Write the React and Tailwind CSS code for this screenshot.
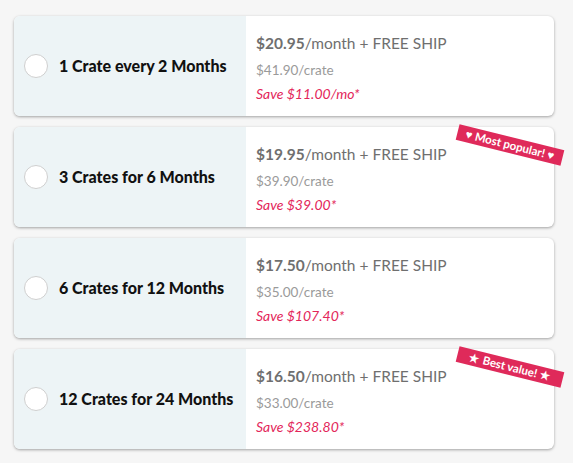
import React from 'react';

const plans = [
  { title: '1 Crate every 2 Months', price: '$20.95', crate: '$41.90/crate', save: 'Save $11.00/mo*' },
  { title: '3 Crates for 6 Months', price: '$19.95', crate: '$39.90/crate', save: 'Save $39.00*', badge: '♥ Most popular! ♥' },
  { title: '6 Crates for 12 Months', price: '$17.50', crate: '$35.00/crate', save: 'Save $107.40*' },
  { title: '12 Crates for 24 Months', price: '$16.50', crate: '$33.00/crate', save: 'Save $238.80*', badge: '★ Best value! ★' },
];

const PlanCard = ({ plan }) => (
  <div className="relative flex h-[100px] rounded-[6px] bg-white shadow-[0_1px_3px_rgba(0,0,0,0.35)]">
    <div className="flex w-[232px] items-center gap-[11px] rounded-l-[6px] bg-[#edf4f6] pl-[10px]">
      <span className="h-[24px] w-[24px] shrink-0 rounded-full border border-[#cfcfcf] bg-white" />
      <span className="text-[16px] font-black text-[#111]">{plan.title}</span>
    </div>
    <div className="flex flex-col pl-[10px] pt-[16px]">
      <div className="leading-[22px] text-[15.5px] text-[#6f6f6f]">
        <span className="font-bold">{plan.price}</span>/month + FREE SHIP
      </div>
      <div className="mt-[6px] leading-[20px] text-[13.5px] text-[#9a9a9a]">{plan.crate}</div>
      <div className="mt-[4px] leading-[20px] text-[14px] italic text-[#e3265a]">{plan.save}</div>
    </div>
    {plan.badge && (
      <div className="absolute left-[442px] top-[10px] flex h-[16px] w-[108px] rotate-[14deg] items-center justify-center bg-[#df2a5a] text-[11.5px] font-bold text-white">
        {plan.badge}
      </div>
    )}
  </div>
);

export default function App() {
  return (
    <div className="min-h-[463px] w-[573px] bg-[#f6f6f6] pl-[14px] pr-[19px] pt-[16px] pb-[14px] font-['Lato','Liberation_Sans',sans-serif]">
      <div className="flex flex-col gap-[11px]">
        {plans.map((p) => (
          <PlanCard key={p.title} plan={p} />
        ))}
      </div>
    </div>
  );
}
